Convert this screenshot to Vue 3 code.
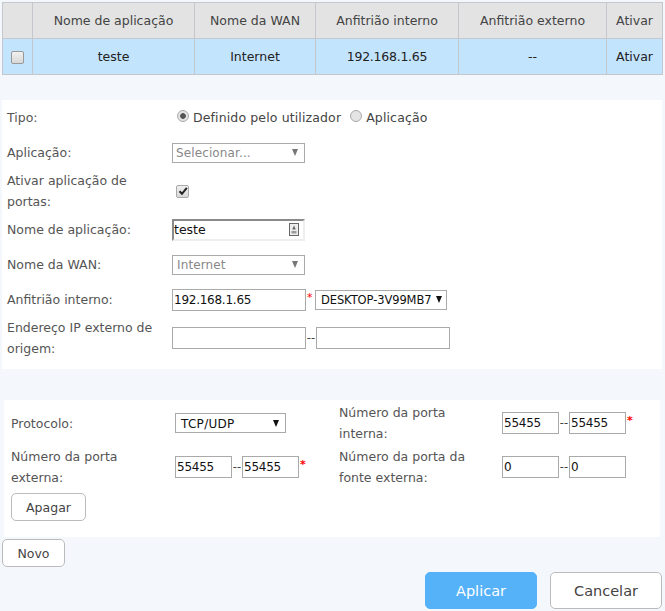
<script setup>
const columns = [
  { label: '', cls: 'c0' },
  { label: 'Nome de aplicação', value: 'teste', cls: 'c1' },
  { label: 'Nome da WAN', value: 'Internet', cls: 'c2' },
  { label: 'Anfitrião interno', value: '192.168.1.65', cls: 'c3' },
  { label: 'Anfitrião externo', value: '--', cls: 'c4' },
  { label: 'Ativar', value: 'Ativar', cls: 'c5' },
]
</script>

<template>
  <div class="page">
    <table class="grid">
      <thead>
        <tr>
          <th v-for="c in columns" :key="c.cls" :class="c.cls">{{ c.label }}</th>
        </tr>
      </thead>
      <tbody>
        <tr>
          <td v-for="c in columns" :key="c.cls" :class="c.cls">
            <span v-if="c.cls === 'c0'" class="box"></span>
            <template v-else>{{ c.value }}</template>
          </td>
        </tr>
      </tbody>
    </table>

    <section class="panel first">
      <div class="row">
        <label class="lab">Tipo:</label>
        <div class="ctl tipo">
          <span class="radio on"></span><span class="opt">Definido pelo utilizador</span>
          <span class="radio off"></span><span class="opt">Aplicação</span>
        </div>
      </div>
      <div class="row">
        <label class="lab">Aplicação:</label>
        <div class="ctl">
          <div class="sel muted w133"><span>Selecionar...</span><i class="tri grey"></i></div>
        </div>
      </div>
      <div class="row tall">
        <label class="lab">Ativar aplicação de portas:</label>
        <div class="ctl">
          <span class="box checked">
            <svg viewBox="0 0 10 10" width="10" height="10"><path d="M1.5 5.2 L4 7.8 L8.8 1.8" fill="none" stroke="#222" stroke-width="2"/></svg>
          </span>
        </div>
      </div>
      <div class="row">
        <label class="lab">Nome de aplicação:</label>
        <div class="ctl">
          <div class="inset">
            <span>teste</span>
            <svg class="key" viewBox="0 0 10 13" width="10" height="13">
              <rect x="0.5" y="0.5" width="9" height="12" fill="#eee" stroke="#666"/>
              <path d="M5 2.5 L6.8 6.5 H3.2 Z" fill="#666"/>
              <rect x="2.5" y="8" width="5" height="2.5" fill="#999"/>
            </svg>
          </div>
        </div>
      </div>
      <div class="row">
        <label class="lab">Nome da WAN:</label>
        <div class="ctl">
          <div class="sel muted w133 pad5"><span>Internet</span><i class="tri grey"></i></div>
        </div>
      </div>
      <div class="row">
        <label class="lab">Anfitrião interno:</label>
        <div class="ctl">
          <input class="txt w134" value="192.168.1.65" />
          <em class="star s1">*</em>
          <div class="sel dark host"><span>DESKTOP-3V99MB7</span><i class="tri"></i></div>
        </div>
      </div>
      <div class="row tall">
        <label class="lab">Endereço IP externo de origem:</label>
        <div class="ctl">
          <input class="txt w134" />
          <span class="dash">--</span>
          <input class="txt w134" />
        </div>
      </div>
    </section>

    <section class="panel second">
      <div class="cols">
        <div class="pair">
          <label class="lab">Protocolo:</label>
          <div class="ctl">
            <div class="sel dark proto"><span>TCP/UDP</span><i class="tri"></i></div>
          </div>
        </div>
        <div class="pair">
          <label class="lab">Número da porta interna:</label>
          <div class="ctl">
            <input class="txt w57" value="55455" />
            <span class="dash">--</span>
            <input class="txt w57" value="55455" />
            <em class="star s2">*</em>
          </div>
        </div>
        <div class="pair">
          <label class="lab">Número da porta externa:</label>
          <div class="ctl">
            <input class="txt w57" value="55455" />
            <span class="dash">--</span>
            <input class="txt w57" value="55455" />
            <em class="star s2">*</em>
          </div>
        </div>
        <div class="pair">
          <label class="lab">Número da porta da fonte externa:</label>
          <div class="ctl">
            <input class="txt w57" value="0" />
            <span class="dash">--</span>
            <input class="txt w57" value="0" />
          </div>
        </div>
      </div>
      <button class="btn apagar">Apagar</button>
    </section>

    <button class="btn novo">Novo</button>

    <div class="actions">
      <button class="btn primary">Aplicar</button>
      <button class="btn cancel">Cancelar</button>
    </div>
  </div>
</template>

<style>
html, body { margin: 0; background: #f4f8fd; }
</style>

<style scoped>
.page {
  width: 665px;
  height: 611px;
  overflow: hidden;
  background: #f4f8fd;
  font-family: "DejaVu Sans", Verdana, sans-serif;
  font-size: 12.5px;
  color: #555;
  padding-top: 2px;
  box-sizing: border-box;
}
.grid {
  margin-left: 2px;
  width: 660px;
  table-layout: fixed;
  border-collapse: collapse;
  border: 1px solid #c4c7cb;
}
.grid th, .grid td {
  border: 1px solid #c4c7cb;
  height: 35px;
  padding: 0;
  text-align: center;
  font-weight: normal;
  box-sizing: content-box;
}
.grid th { background: #e3e3e3; color: #444; }
.grid td { background: #c3e4fd; color: #222; }
.grid td.c3 { letter-spacing: -0.25px; }
.c0 { width: 29px; }
.c1 { width: 161px; }
.c2 { width: 120px; }
.c3 { width: 142px; }
.c4 { width: 147px; }
.c5 { width: 55px; }
.box {
  display: inline-flex;
  align-items: center;
  justify-content: center;
  width: 11px;
  height: 11px;
  border: 1px solid #999;
  border-radius: 2px;
  background: linear-gradient(#f0f0f0, #d8d8d8);
  vertical-align: middle;
}
.panel { background: #fff; box-sizing: border-box; }
.first {
  margin: 25px 3px 0 2px;
  height: 269px;
  padding-left: 5px;
}
.row { display: flex; align-items: center; height: 35px; }
.row.tall { height: 42px; }
.lab { width: 165px; flex: none; line-height: 21px; box-sizing: border-box; }
.ctl { display: flex; align-items: center; position: relative; }
.tipo { padding-left: 5px; color: #444; }
.radio {
  width: 10px;
  height: 10px;
  border: 1px solid #aaa;
  border-radius: 50%;
  background: #e4e4e4;
  margin-right: 4px;
  position: relative;
  top: -2px;
}
.radio.on { background: radial-gradient(circle, #555 0 2.5px, #e4e4e4 3.2px); }
.opt { margin-right: 9px; letter-spacing: 0.13px; }
.sel {
  display: flex;
  align-items: center;
  justify-content: space-between;
  height: 20px;
  box-sizing: border-box;
  border: 1px solid #aaa;
  background: #fff;
  padding: 0 6px 0 3px;
  font-size: 12px;
}
.pad5 { padding-left: 4px; }
.muted { color: #888; letter-spacing: 0.12px; }
.dark { color: #111; padding-left: 5px; padding-right: 4px; }
.w133 { width: 133px; }
.host { width: 132px; margin-left: 6px; font-size: 11.5px; letter-spacing: -0.1px; }
.proto { width: 111px; letter-spacing: 0.3px; padding-right: 6px; padding-top: 1px; }
.tri {
  width: 0;
  height: 0;
  border-left: 3.5px solid transparent;
  border-right: 3.5px solid transparent;
  border-top: 7px solid #111;
}
.tri.grey { border-top-color: #777; }
.box.checked { border-color: #aaa; }
.box.checked svg { display: block; }
.first .box { margin-left: 4px; }
.inset {
  width: 133px;
  height: 22px;
  box-sizing: border-box;
  border-style: solid;
  border-width: 2px;
  border-color: #8a8a8a #eee #eee #8a8a8a;
  background: #fff;
  color: #111;
  display: flex;
  align-items: center;
  justify-content: space-between;
  padding: 0 4px 0 0;
}
.txt {
  height: 22px;
  box-sizing: border-box;
  border: 1px solid #aaa;
  background: #fff;
  color: #111;
  font-family: inherit;
  font-size: 12px;
  letter-spacing: -0.25px;
  padding: 0 1px;
  margin: 0;
  outline: none;
}
.w134 { width: 134px; }
.w57 { width: 57px; }
.dash { width: 10px; text-align: center; color: #444; font-size: 11.5px; }
.star {
  color: #f00;
  font-style: normal;
  font-size: 11px;
  font-weight: bold;
  line-height: 1;
  align-self: flex-start;
  margin-top: 3px;
}
.s1 { width: 2px; margin-left: 1px; font-weight: normal; }
.s2 { margin-left: 1px; }
.second {
  margin: 31px 5px 0 4px;
  height: 137px;
  padding: 2px 0 0 7px;
}
.cols {
  display: grid;
  grid-template-columns: 328px 1fr;
  row-gap: 2px;
}
.pair { display: flex; align-items: center; height: 42px; }
.pair .lab { width: 164px; padding-right: 20px; }
.pair:nth-child(even) .lab { width: 163px; }
.btn {
  font-family: inherit;
  font-size: 12.5px;
  box-sizing: border-box;
  border: 1px solid #bbb;
  border-radius: 5px;
  background: #fff;
  color: #444;
  padding: 0;
  cursor: pointer;
}
.apagar { display: block; width: 75px; height: 28px; margin-top: 5px; }
.novo { display: block; width: 63px; height: 28px; margin: 2px 0 0 2px; }
.actions {
  display: flex;
  justify-content: flex-end;
  gap: 13px;
  margin: 5px 3px 0 0;
}
.actions .btn { width: 112px; height: 37px; font-size: 14.5px; }
.primary { background: #55b1f8; border-color: #55b1f8; color: #fff; }
.cancel { color: #444; }
</style>
